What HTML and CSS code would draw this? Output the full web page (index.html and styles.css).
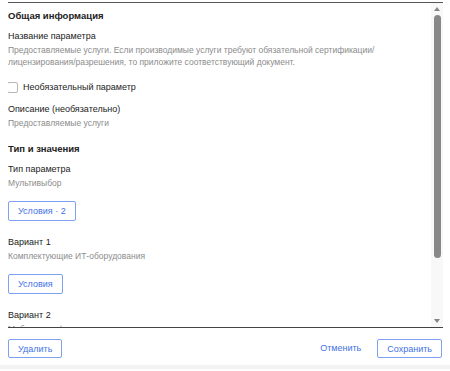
FILE: index.html
```html
<!DOCTYPE html>
<html>
	<head>
		<title>Параметр</title><meta charset="utf-8">
		<link rel="stylesheet" href="styles.css">
	</head>
	<body>
		<div class="dialog">
			<div class="dialog-body">
				<div class="scroll-content">
					<h4 class="section-title">Общая информация</h4>
					<div class="field">
						<div class="label">Название параметра</div>
						<div class="value">Предоставляемые услуги. Если производимые услуги требуют обязательной сертификации/<br/>лицензирования/разрешения, то приложите соответствующий документ.</div>
					</div>
					<label class="check">
						<span class="check-box"></span>
						Необязательный параметр
					</label>
					<div class="field">
						<div class="label">Описание (необязательно)</div>
						<div class="value">Предоставляемые услуги</div>
					</div>

					<h4 class="section-title second">Тип и значения</h4>
					<div class="field">
						<div class="label">Тип параметра</div>
						<div class="value">Мультивыбор</div>
					</div>
					<button class="btn">Условия · 2</button>

					<div class="field variant">
						<div class="label">Вариант 1</div>
						<div class="value">Комплектующие ИТ-оборудования</div>
					</div>
					<button class="btn">Условия</button>

					<div class="field variant">
						<div class="label">Вариант 2</div>
						<div class="value">Мебель или фурнитура</div>
					</div>
					<button class="btn">Условия</button>
				</div>
				<div class="scrollbar">
					<span class="sb-btn"><span class="sb-arrow up"></span></span>
					<div class="sb-track"><div class="sb-thumb"></div></div>
					<span class="sb-btn"><span class="sb-arrow down"></span></span>
				</div>
			</div>
			<div class="dialog-footer">
				<button class="btn">Удалить</button>
				<div class="footer-right">
					<button class="link">Отменить</button>
					<button class="btn">Сохранить</button>
				</div>
			</div>
		</div>
		<div class="strip"></div>
	</body>
</html>
```

FILE: styles.css
```css
body {
	margin: 0;
	padding: 2px 7px 0 8px;
	font-family: "Liberation Sans", Arial, sans-serif;
	font-size: 9px;
	color: #222;
	background: white;
}
.dialog-body {
	display: flex;
	height: 326px;
	box-sizing: border-box;
	border-top: 1px solid #555;
	border-bottom: 1px solid #444;
}
.scroll-content { flex: 1; overflow: hidden; }

/* scrollbar drawn by hand, the headless one is hidden */
.scrollbar {
	width: 12px;
	display: flex;
	flex-direction: column;
	background: #f8f8f8;
}
.sb-btn {
	height: 12px;
	display: flex;
	align-items: center;
	justify-content: center;
}
.sb-arrow {
	width: 0;
	height: 0;
	border-left: 3px solid transparent;
	border-right: 3px solid transparent;
}
.sb-arrow.up { border-bottom: 4px solid #858585; }
.sb-arrow.down { border-top: 4px solid #858585; }
.sb-track { flex: 1; }
.sb-thumb {
	width: 7px;
	height: 243px;
	margin-left: 3px;
	border-radius: 4px;
	background: #888;
}

.section-title {
	font-size: 9.5px;
	font-weight: bold;
	margin: 6px 0 6px;
	line-height: 14px;
}
.section-title.second { margin-top: 13px; }
.field { margin-bottom: 12px; }
.label { color: #222; line-height: 14px; margin-bottom: 1px; }
.value { color: #8c8c8c; font-size: 8.5px; line-height: 12px; }
.variant { margin-top: 14px; }
.check {
	display: flex;
	align-items: center;
	gap: 5px;
	margin: 9px 0 8px;
	line-height: 14px;
}
.check-box {
	width: 9px;
	height: 9px;
	border: 1px solid #b8b8b8;
	border-radius: 2px;
	margin-left: -1px;
}
.btn {
	display: inline-flex;
	align-items: center;
	font-family: inherit;
	font-size: 9px;
	line-height: 12px;
	color: #3f72e6;
	background: white;
	border: 1px solid #7ea2f0;
	border-radius: 2px;
	height: 20px;
	padding: 0 9px;
	cursor: pointer;
}
.dialog-footer {
	display: flex;
	justify-content: space-between;
	align-items: flex-start;
	height: 37px;
	box-sizing: border-box;
	padding: 11px 1px 0 0;
}
.dialog-footer .btn { height: 19px; }
.footer-right { display: flex; align-items: center; gap: 16px; }
.link {
	font-family: inherit;
	font-size: 9px;
	line-height: 19px;
	color: #3f72e6;
	background: none;
	border: none;
	padding: 0;
	cursor: pointer;
}
.strip {
	margin: 0 -7px 0 -8px;
	height: 4px;
	background: #f3f3f3;
}
```
